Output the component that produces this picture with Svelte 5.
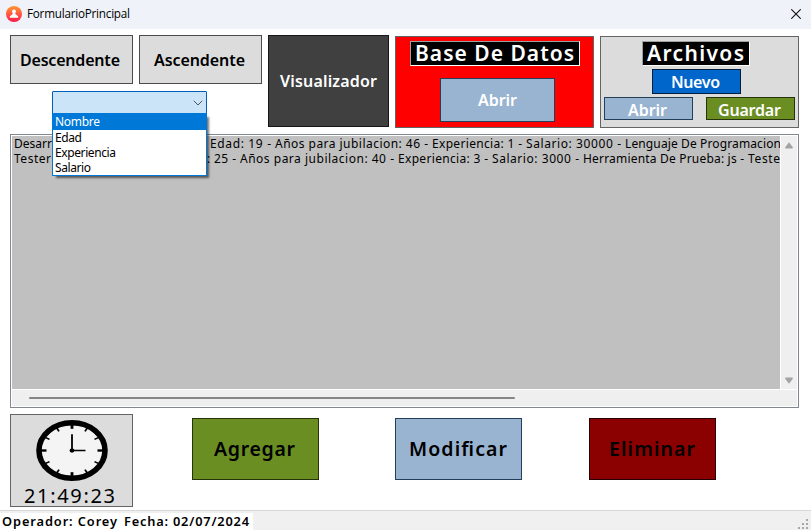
<script>
  const fields = [
    { name: 'Nombre', width: 45 },
    { name: 'Edad', width: 27 },
    { name: 'Experiencia', width: 61 },
    { name: 'Salario', width: 36 }
  ];
  const people = [
    {
      role: 'Desarr', roleWidth: 38, offset: 196,
      details: [['Edad: 19 -', 61], ['Años para jubilacion: 46 -', 153], ['Experiencia: 1 -', 90], ['Salario: 30000 -', 95], ['Lenguaje De Programacion', 156]]
    },
    {
      role: 'Tester', roleWidth: 37, offset: 193,
      details: [[': 25 -', 29], ['Años para jubilacion: 40 -', 154], ['Experiencia: 3 -', 90], ['Salario: 3000 -', 87], ['Herramienta De Prueba: js -', 161], ['Teste', 32]]
    }
  ];
  let selected = $state('Nombre');
  const ticks = Array.from({ length: 12 }, (_, i) => i * 30);
</script>

{#snippet label(text, width, size)}
  <svg class="label" {width} height={size} font-size={size}>
    <text x="0" y={size * 0.86} textLength={width} lengthAdjust="spacing">{text}</text>
  </svg>
{/snippet}

<div class="window">
  <header>
    <svg class="logo" width="16" height="16" viewBox="0 0 16 16">
      <defs><linearGradient id="sun" x2="0" y2="1"><stop stop-color="#ff9a32" /><stop offset="1" stop-color="#ff174d" /></linearGradient></defs>
      <circle cx="8" cy="8" r="8" fill="url(#sun)" />
      <path d="M8 3.4a2 2 0 0 1 1.3 3.5v1.2l2.9 2.2v1.5H3.8v-1.5l2.9-2.2V6.9A2 2 0 0 1 8 3.4z" fill="#fff" />
    </svg>
    <span class="caption">{@render label('FormularioPrincipal', 103, 11.7)}</span>
    <svg class="close" width="10" height="10" viewBox="0 0 10 10"><path d="M.3.3l9.4 9.4M9.7.3L.3 9.7" stroke="#111" stroke-width="1.1" /></svg>
  </header>

  <section class="top">
    <div class="sorting">
      <div class="pair">
        <button class="silver">{@render label('Descendente', 100, 16)}</button>
        <button class="silver">{@render label('Ascendente', 91, 16)}</button>
      </div>
      <div class="combo">
        <svg width="10" height="6" viewBox="0 0 10 6"><path d="M.8.8L5 5 9.2.8" fill="none" stroke="#555" /></svg>
        <div class="menu">
          {#each fields as field}
            <div class="option" class:active={field.name === selected}>{@render label(field.name, field.width, 12)}</div>
          {/each}
        </div>
      </div>
    </div>
    <button class="viewer">{@render label('Visualizador', 97, 16)}</button>
    <div class="panel database">
      <div class="heading wide">{@render label('Base De Datos', 159, 21)}</div>
      <button class="steel open">{@render label('Abrir', 39, 16)}</button>
    </div>
    <div class="panel files">
      <div class="heading">{@render label('Archivos', 97, 21)}</div>
      <button class="new">{@render label('Nuevo', 49, 16)}</button>
      <div class="file-row">
        <button class="steel">{@render label('Abrir', 39, 16)}</button>
        <button class="green">{@render label('Guardar', 63, 16)}</button>
      </div>
    </div>
  </section>

  <section class="listbox">
    <div class="body">
      <div class="rows">
        {#each people as person}
          <div class="row">
            <span class="role" style:width={`${person.offset}px`}>{@render label(person.role, person.roleWidth, 12)}</span>
            <div class="details">
              {#each person.details as [text, width]}
                {@render label(text, width, 12)}
              {/each}
            </div>
          </div>
        {/each}
      </div>
      <div class="vscroll">
        <svg width="10" height="7" viewBox="0 0 10 7"><path d="M5 .3L9 5.5 8.3 6.6H1.7L1 5.5z" fill="#a3a3a3" /></svg>
        <svg width="10" height="7" viewBox="0 0 10 7"><path d="M5 6.7L9 1.5 8.3.4H1.7L1 1.5z" fill="#a3a3a3" /></svg>
      </div>
    </div>
    <div class="hscroll"><div class="thumb"></div></div>
  </section>

  <section class="bottom">
    <div class="clock">
      <svg width="72" height="61" viewBox="0 0 72 61">
        <ellipse cx="36" cy="30.5" rx="33" ry="27.7" fill="#f4f4f4" stroke="#000" stroke-width="5.6" />
        <g transform="translate(36 30.5) scale(1 .85)" stroke="#000" stroke-width="1.8">
          {#each ticks as angle}
            <path d={angle % 90 ? 'M0 -31V-26' : 'M0 -31V-25.5'} stroke-width={angle % 90 ? 1.8 : 2.8} transform={`rotate(${angle})`} />
          {/each}
          <path d="M0 -19V0H13.5" fill="none" />
          <circle r="1.6" />
        </g>
      </svg>
      <div class="time">{@render label('21:49:23', 91, 20)}</div>
    </div>
    <button class="green add">{@render label('Agregar', 81, 19.5)}</button>
    <button class="steel edit">{@render label('Modificar', 98, 19.5)}</button>
    <button class="red remove">{@render label('Eliminar', 86, 19.5)}</button>
  </section>

  <footer>
    <div class="status">
      {@render label('Operador: Corey', 115, 12.8)}
      {@render label('Fecha: 02/07/2024', 125, 12.8)}
    </div>
    <svg class="grip" width="11" height="11" viewBox="0 0 11 11" fill="#a8a8a8"><path d="M8 0h2v2H8zM4 4h2v2H4zM8 4h2v2H8zM0 8h2v2H0zM4 8h2v2H4zM8 8h2v2H8z" /></svg>
  </footer>
</div>

<style>
  :global(body) { margin: 0; background: #fff; }
  .window { width: 811px; height: 530px; display: flex; flex-direction: column; overflow: hidden; background: #fff; color: #000; font-family: "Noto Sans", "Open Sans", sans-serif; }
  .window, .window * { box-sizing: border-box; }
  svg { display: block; flex: none; }
  .label { overflow: visible; fill: currentColor; }
  header { height: 29px; flex: none; display: flex; align-items: center; padding: 0 10px 2px 6px; background: #eff3f9; }
  .logo { margin-right: 5px; }
  .caption { font-family: "Open Sans", sans-serif; padding-top: 1px; }
  .close { margin-left: auto; }
  button { font: 600 16px "Noto Sans", sans-serif; padding: 0; margin: 0; border: 1px solid; border-radius: 0; display: flex; align-items: center; justify-content: center; flex: none; }
  .silver { background: #dcdcdc; border-color: #4b4b4b; width: 123px; height: 49px; color: #000; padding-right: 3px; }
  .steel { background: #99b4d1; border-color: #263f59; color: #fff; }
  .green { background: #6b8e23; border-color: #26330b; color: #fff; }
  .red { background: #8b0000; border-color: #250000; }
  .top { display: flex; gap: 6px; height: 105px; padding: 6px 10px 0; flex: none; }
  .sorting { width: 252px; flex: none; }
  .pair { display: flex; gap: 6px; }
  .combo { position: relative; z-index: 2; width: 155px; height: 23px; margin: 7px 0 0 42px; border: 1px solid #005fb8; border-radius: 1px; background: #cce4f7; display: flex; align-items: center; justify-content: flex-end; padding-right: 3px; }
  .menu { position: absolute; top: 21px; left: -1px; width: 155px; height: 63px; border: 1px solid #0078d7; background: #fff; box-shadow: 3px 3px 2px -1px rgba(0, 0, 0, .55); }
  .option { height: 15px; padding-left: 2px; display: flex; align-items: center; }
  .active { height: 16px; background: #0078d7; color: #fff; }
  .viewer { width: 121px; height: 92px; background: #404040; border-color: #161616; color: #fff; padding: 0 1px 1px 0; }
  .panel { width: 199px; height: 92px; margin-top: 1px; border: 1px solid #646464; display: flex; flex-direction: column; align-items: center; padding-top: 4px; flex: none; }
  .database { background: red; }
  .files { background: #dcdcdc; }
  .heading { width: 108px; height: 25px; flex: none; border: 1px solid #fff; border-top-color: #a0a0a0; border-left-color: #a0a0a0; background: #000; color: #fff; font-weight: 600; display: flex; align-items: center; justify-content: center; padding-right: 1px; }
  .files .heading { margin-right: 7px; }
  .heading.wide { width: 170px; }
  .open { width: 115px; height: 44px; margin: 12px 0 0 6px; padding: 0; }
  .new { width: 89px; height: 25px; margin: 3px 6px 0 0; background: #0066cc; border-color: #001e3d; color: #fff; padding: 0 3px 0 0; }
  .file-row { display: flex; gap: 13px; margin-top: 3px; }
  .file-row button { width: 89px; height: 23px; padding: 2px 2px 0 0; }
  .listbox { width: 789px; height: 274px; flex: none; margin-left: 10px; border: 1px solid #828790; padding: 1px; background: #fff; }
  .body { display: flex; height: 253px; }
  .rows { width: 768px; height: 253px; overflow: hidden; background: #c0c0c0; padding: 0 0 0 2px; }
  .row { display: flex; height: 15px; align-items: center; }
  .role { flex: none; }
  .details { display: flex; gap: 4px; }
  .vscroll { width: 16px; margin-left: 1px; background: #efefef; display: flex; flex-direction: column; justify-content: space-between; align-items: center; padding: 6px 0 5px; }
  .hscroll { height: 16px; margin-top: 1px; background: #efefef; padding: 7px 0 0 17px; }
  .thumb { width: 486px; height: 2px; background: #858585; border-radius: 1px; }
  .bottom { display: flex; height: 102px; padding: 6px 0 0 10px; flex: none; }
  .clock { width: 123px; height: 93px; border: 1px solid #646464; background: #dcdcdc; display: flex; flex-direction: column; align-items: center; padding-top: 5px; gap: 5px; flex: none; }
  .time { margin-right: 4px; }
  .bottom button { width: 127px; height: 62px; margin-top: 4px; color: #000; }
  .bottom .add { margin-left: 59px; padding-right: 2px; }
  .bottom .edit { margin-left: 76px; padding-right: 2px; }
  .bottom .remove { margin-left: 67px; padding-right: 2px; }
  footer { height: 20px; border-top: 1px solid #d7d7d7; background: #f0f0f0; display: flex; justify-content: space-between; padding: 2px 2px 0 0; flex: none; }
  .status { width: 253px; height: 17px; background: #fff; display: flex; align-items: center; gap: 7px; padding-left: 2px; font-weight: 600; }
  .grip { margin-top: 6px; }
</style>
